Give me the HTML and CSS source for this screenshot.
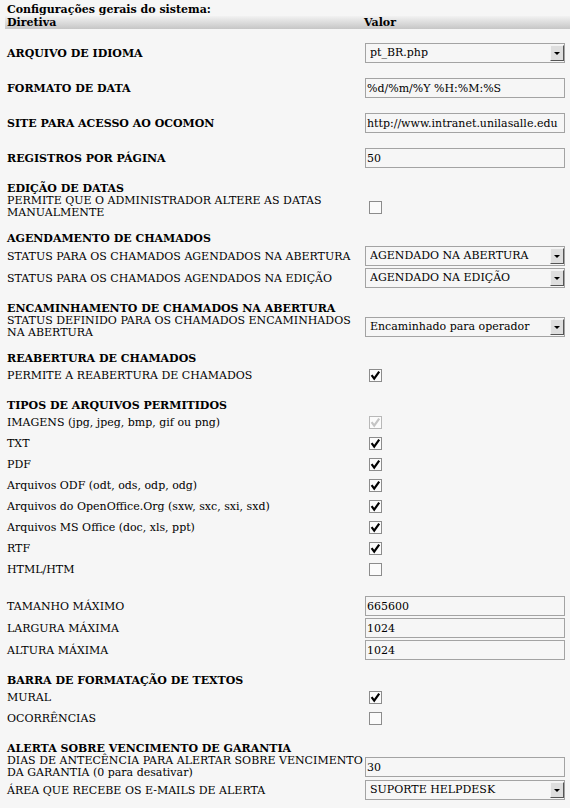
FILE: index.html
```html
<!DOCTYPE html>
<html lang="pt-BR">
<head>
<meta charset="utf-8">
<title>Configurações gerais do sistema</title>
<link rel="stylesheet" href="styles.css">
</head>
<body>
<div class="page">
  <div class="title">Configurações gerais do sistema:</div>
  <div class="thead"><span>Diretiva</span><span>Valor</span></div>
  <div class="sp"></div>

  <div class="row"><div class="label b">ARQUIVO DE IDIOMA</div>
    <div class="select"><span class="opt">pt_BR.php</span><span class="arrow"></span></div></div>
  <div class="sp"></div>
  <div class="row"><div class="label b">FORMATO DE DATA</div>
    <input class="txt" type="text" value="%d/%m/%Y %H:%M:%S"></div>
  <div class="sp"></div>
  <div class="row"><div class="label b">SITE PARA ACESSO AO OCOMON</div>
    <input class="txt" type="text" value="http://www.intranet.unilasalle.edu"></div>
  <div class="sp"></div>
  <div class="row"><div class="label b">REGISTROS POR PÁGINA</div>
    <input class="txt" type="text" value="50"></div>
  <div class="sp"></div>

  <div class="head">EDIÇÃO DE DATAS</div>
  <div class="row tall"><div class="label">PERMITE QUE O ADMINISTRADOR ALTERE AS DATAS<br>MANUALMENTE</div>
    <span class="cb"></span></div>
  <div class="sp"></div>

  <div class="head">AGENDAMENTO DE CHAMADOS</div>
  <div class="row"><div class="label">STATUS PARA OS CHAMADOS AGENDADOS NA ABERTURA</div>
    <div class="select"><span class="opt">AGENDADO NA ABERTURA</span><span class="arrow"></span></div></div>
  <div class="row"><div class="label">STATUS PARA OS CHAMADOS AGENDADOS NA EDIÇÃO</div>
    <div class="select"><span class="opt">AGENDADO NA EDIÇÃO</span><span class="arrow"></span></div></div>
  <div class="sp"></div>

  <div class="head">ENCAMINHAMENTO DE CHAMADOS NA ABERTURA</div>
  <div class="row tall"><div class="label">STATUS DEFINIDO PARA OS CHAMADOS ENCAMINHADOS<br>NA ABERTURA</div>
    <div class="select"><span class="opt">Encaminhado para operador</span><span class="arrow"></span></div></div>
  <div class="sp"></div>

  <div class="head">REABERTURA DE CHAMADOS</div>
  <div class="row cbrow"><div class="label">PERMITE A REABERTURA DE CHAMADOS</div>
    <span class="cb"><svg width="11" height="11" viewBox="0 0 11 11"><path d="M1.6 5.2 L4.2 8.6 L9.2 1.6" fill="none" stroke="#000" stroke-width="2.2"/></svg></span></div>
  <div class="sp"></div>

  <div class="head">TIPOS DE ARQUIVOS PERMITIDOS</div>
  <div class="row cbrow"><div class="label">IMAGENS (jpg, jpeg, bmp, gif ou png)</div>
    <span class="cb dis"><svg width="11" height="11" viewBox="0 0 11 11"><path d="M1.6 5.2 L4.2 8.6 L9.2 1.6" fill="none" stroke="#c4c4c4" stroke-width="2.2"/></svg></span></div>
  <div class="row cbrow"><div class="label">TXT</div>
    <span class="cb"><svg width="11" height="11" viewBox="0 0 11 11"><path d="M1.6 5.2 L4.2 8.6 L9.2 1.6" fill="none" stroke="#000" stroke-width="2.2"/></svg></span></div>
  <div class="row cbrow"><div class="label">PDF</div>
    <span class="cb"><svg width="11" height="11" viewBox="0 0 11 11"><path d="M1.6 5.2 L4.2 8.6 L9.2 1.6" fill="none" stroke="#000" stroke-width="2.2"/></svg></span></div>
  <div class="row cbrow"><div class="label">Arquivos ODF (odt, ods, odp, odg)</div>
    <span class="cb"><svg width="11" height="11" viewBox="0 0 11 11"><path d="M1.6 5.2 L4.2 8.6 L9.2 1.6" fill="none" stroke="#000" stroke-width="2.2"/></svg></span></div>
  <div class="row cbrow"><div class="label">Arquivos do OpenOffice.Org (sxw, sxc, sxi, sxd)</div>
    <span class="cb"><svg width="11" height="11" viewBox="0 0 11 11"><path d="M1.6 5.2 L4.2 8.6 L9.2 1.6" fill="none" stroke="#000" stroke-width="2.2"/></svg></span></div>
  <div class="row cbrow"><div class="label">Arquivos MS Office (doc, xls, ppt)</div>
    <span class="cb"><svg width="11" height="11" viewBox="0 0 11 11"><path d="M1.6 5.2 L4.2 8.6 L9.2 1.6" fill="none" stroke="#000" stroke-width="2.2"/></svg></span></div>
  <div class="row cbrow"><div class="label">RTF</div>
    <span class="cb"><svg width="11" height="11" viewBox="0 0 11 11"><path d="M1.6 5.2 L4.2 8.6 L9.2 1.6" fill="none" stroke="#000" stroke-width="2.2"/></svg></span></div>
  <div class="row cbrow"><div class="label">HTML/HTM</div>
    <span class="cb"></span></div>
  <div class="sp15"></div>

  <div class="row"><div class="label">TAMANHO MÁXIMO</div>
    <input class="txt" type="text" value="665600"></div>
  <div class="row"><div class="label">LARGURA MÁXIMA</div>
    <input class="txt" type="text" value="1024"></div>
  <div class="row"><div class="label">ALTURA MÁXIMA</div>
    <input class="txt" type="text" value="1024"></div>
  <div class="sp"></div>

  <div class="head">BARRA DE FORMATAÇÃO DE TEXTOS</div>
  <div class="row cbrow"><div class="label">MURAL</div>
    <span class="cb"><svg width="11" height="11" viewBox="0 0 11 11"><path d="M1.6 5.2 L4.2 8.6 L9.2 1.6" fill="none" stroke="#000" stroke-width="2.2"/></svg></span></div>
  <div class="row cbrow"><div class="label">OCORRÊNCIAS</div>
    <span class="cb"></span></div>
  <div class="sp"></div>

  <div class="head">ALERTA SOBRE VENCIMENTO DE GARANTIA</div>
  <div class="row tall"><div class="label">DIAS DE ANTECÊNCIA PARA ALERTAR SOBRE VENCIMENTO<br>DA GARANTIA (0 para desativar)</div>
    <input class="txt" type="text" value="30"></div>
  <div class="row"><div class="label">ÁREA QUE RECEBE OS E-MAILS DE ALERTA</div>
    <div class="select"><span class="opt">SUPORTE HELPDESK</span><span class="arrow"></span></div></div>
</div>
</body>
</html>
```

FILE: styles.css
```css
html, body {
  margin: 0;
  background: #f6f6f6;
}
body {
  font-family: "DejaVu Serif", serif;
  font-size: 11px;
  color: #000;
  overflow: hidden;
}
.page {
  padding-top: 3px;
}
.title {
  font-weight: bold;
  height: 13px;
  line-height: 13px;
  padding-left: 7px;
  white-space: nowrap;
}
.thead {
  display: grid;
  grid-template-columns: 357px 1fr;
  margin-left: 5px;
  padding-left: 2px;
  height: 13px;
  line-height: 13px;
  font-weight: bold;
  background: linear-gradient(#f2f2f2, #c6c6c6);
}
.sp {
  height: 13px;
}
.sp15 {
  height: 15px;
}
.head {
  padding-left: 7px;
  height: 13px;
  line-height: 13px;
  font-weight: bold;
  white-space: nowrap;
}
.row {
  display: grid;
  grid-template-columns: 358px 200px;
  padding-left: 7px;
  align-items: center;
  height: 22px;
}
.row.tall {
  height: 24px;
}
.row.cbrow {
  height: 21px;
}
.label {
  white-space: nowrap;
  line-height: 13px;
}
.row.tall .label {
  line-height: 12px;
}
.b {
  font-weight: bold;
}
.txt {
  display: block;
  width: 200px;
  height: 20px;
  box-sizing: border-box;
  margin: 0;
  border: 1px solid #a3a3a3;
  border-radius: 0;
  padding: 0 1px;
  background: #f6f6f6;
  font: 11px "DejaVu Serif", serif;
  color: #000;
  outline: none;
}
.select {
  display: flex;
  align-items: stretch;
  width: 200px;
  height: 20px;
  box-sizing: border-box;
  border: 1px solid #a3a3a3;
  padding: 1px 0 1px 4px;
  background: #f6f6f6;
}
.opt {
  flex: 1;
  line-height: 16px;
  white-space: nowrap;
  overflow: hidden;
}
.arrow {
  width: 14px;
  box-sizing: border-box;
  border: 1px solid;
  border-color: #f4f4f4 #555 #555 #f4f4f4;
  background: #dedede;
  display: flex;
  align-items: center;
  justify-content: center;
}
.arrow::after {
  content: "";
  border-left: 3px solid transparent;
  border-right: 3px solid transparent;
  border-top: 3px solid #000;
}
.cb {
  display: block;
  width: 13px;
  height: 13px;
  box-sizing: border-box;
  border: 1px solid #8c8c8c;
  background: #fbfbfb;
  margin-left: 4px;
}
.cb svg {
  display: block;
}
.cb.dis {
  border-color: #b8b8b8;
}
```
